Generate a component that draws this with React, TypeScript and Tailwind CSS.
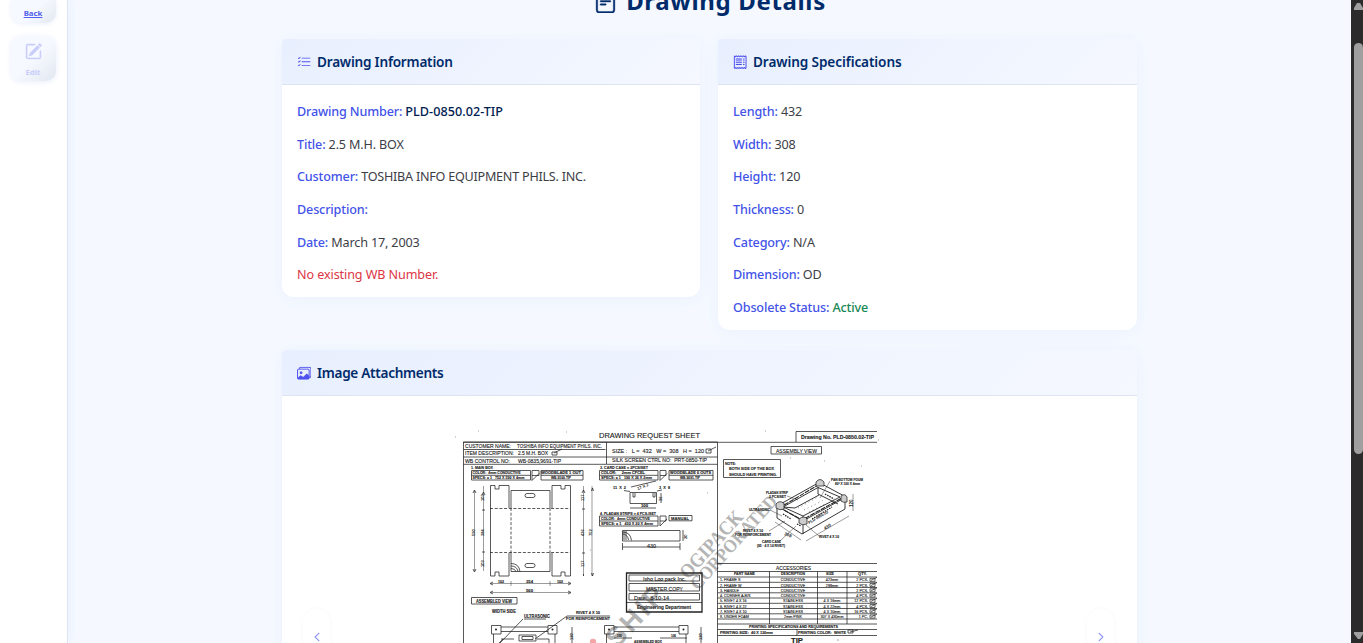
import type { ReactNode } from "react";
import { BsChevronLeft, BsChevronRight, BsFileText, BsImages, BsListCheck, BsPencilSquare, BsReceipt } from "react-icons/bs";

function Card({ icon, title, titleClass, className = "", children }: { icon: ReactNode; title: string; titleClass: string; className?: string; children: ReactNode }) {
  return (
    <section className={`overflow-hidden rounded-t-[4px] rounded-b-xl bg-white shadow-[0_2px_16px_rgba(67,97,238,0.06)] ${className}`}>
      <header className="flex h-[46px] items-center border-b border-[#dbe4f0] bg-linear-135 from-[#e8effe] to-[#f5f8ff] pt-px pl-[15px] text-[#4f52ee]">
        <span className="w-[20px] text-[14.4px]">{icon}</span>
        <h2 className={`pt-px whitespace-nowrap font-semibold text-[#002b6b] ${titleClass}`}>{title}</h2>
      </header>
      {children}
    </section>
  );
}

function Row({ label, value, tone = "text-[#3c4046]", fit = "" }: { label: string; value?: string; tone?: string; fit?: string }) {
  return (
    <p className="h-[32.65px] whitespace-nowrap text-[12.6px] leading-[20.4px] tracking-[-0.15px]">
      <span className="font-medium text-[#4353e8]">{label}</span> <span className={`${tone} ${fit}`}>{value}</span>
    </p>
  );
}

/* x, y, text, width, size, weight */
type Label = [number, number, string, number, number, number];
const labels: Label[] = [
  [599, 437.5, "DRAWING REQUEST SHEET", 101, 7.3, 500],
  [801, 438.5, "Drawing No. PLD-0850.02-TIP", 73, 5.3, 700],
  [465, 447.5, "CUSTOMER NAME:", 46, 5, 500],
  [517, 447.5, "TOSHIBA INFO EQUIPMENT PHILS. INC.", 85, 5, 500],
  [465, 455, "ITEM DESCRIPTION:", 49, 5, 500],
  [518, 455, "2.5 M.H. BOX", 30, 5, 500],
  [465, 462.5, "WB CONTROL NO:", 45, 5, 500],
  [518, 462.5, "WB-0835,9691-TIP", 43, 5, 500],
  [612, 452.5, "SIZE :   L =  432   W =  308   H =  120", 92, 5.4, 500],
  [612, 462, "SILK SCREEN CTRL NO:  PRT-0850-TIP", 95, 5, 500],
  [471, 469, "1. MAIN BOX", 22, 3.8, 600],
  [472.5, 474, "COLOR:  4mm CONDUCTIVE", 48, 3.8, 600],
  [472.5, 479, "SPECS: ± 1   752 X 590 X 4mm", 52, 3.8, 600],
  [541, 474, "WOODBLADE 1 OUT", 40, 3.8, 700],
  [551, 479, "WB-9100-TIP", 20, 3.8, 700],
  [600, 469, "3. CARD CASE = 2PCS/SET", 48, 3.8, 600],
  [601, 474, "COLOR:     2mm CFCEL", 44, 3.8, 600],
  [601, 479, "SPECS: ± 1   190 X 36 X 2mm", 51, 3.8, 600],
  [670, 474, "WOODBLADE 6 OUTS", 41, 3.8, 700],
  [680, 479, "WB-9691-TIP", 20, 3.8, 700],
  [600, 515, "4. PLADAN STRIPS = 4 PCS./SET", 56, 3.8, 600],
  [601, 520, "COLOR:  4mm CONDUCTIVE", 49, 3.8, 600],
  [601, 525, "SPECS: ± 1   430 X 20 X 4mm", 52, 3.8, 600],
  [671, 520, "MANUAL", 18, 4, 700],
  [613, 489, "11  X  2", 13, 4, 600],
  [659, 489, "3  X  8", 11, 4, 600],
  [641, 507, "100", 7, 3.8, 700],
  [647, 548, "430", 9, 5, 500],
  [498, 583, "102", 6, 4, 600],
  [526, 583, "354", 7, 4, 600],
  [557, 583, "102", 6, 4, 600],
  [526, 592, "560", 7, 4, 600],
  [476, 602.5, "ASSEMBLED VIEW", 36, 4.5, 600],
  [492, 612.5, "WIDTH SIDE", 24, 4.5, 600],
  [524, 617.5, "ULTRASONIC", 26, 4.5, 600],
  [576, 614, "RIVET 4 X 10", 24, 4.2, 600],
  [566, 620, "FOR REINFORCEMENT", 44, 4.2, 600],
  [776, 452.5, "ASSEMBLY VIEW", 41, 5.5, 500],
  [725, 464.5, "NOTE:", 11, 4.3, 600],
  [729, 470, "BOTH SIDE OF THE BOX", 45, 4.3, 600],
  [729, 475.5, "SHOULD HAVE PRINTING.", 48, 4.3, 600],
  [831, 481, "PAN BOTTOM FOUM", 32, 3.8, 600],
  [835, 485, "80° X 100 X 4mm", 25, 3.8, 600],
  [766, 494, "PLADAN STRIP", 22, 3.6, 600],
  [769, 498, "2 PCS/SET", 17, 3.6, 600],
  [749, 511, "ULTRASONIC", 21, 3.6, 600],
  [743, 532, "RIVET 4 X 10", 20, 3.6, 600],
  [735, 536, "FOR REINFORCEMENT", 36, 3.6, 600],
  [762, 543, "CARD CASE", 19, 3.6, 600],
  [757, 547, "(95 · 4 X 10 RIVET)", 28, 3.6, 600],
  [819, 538, "RIVET 4 X 10", 20, 3.6, 600],
  [776, 570, "ACCESSORIES", 35, 5, 500],
  [734, 575, "PART NAME", 21, 3.8, 700],
  [781, 575, "DESCRIPTION", 24, 3.8, 700],
  [826, 575, "SIZE", 8, 3.8, 700],
  [858, 575, "QTY.", 9, 3.8, 700],
  [749, 628, "PRINTING SPECIFICATIONS AND REQUIREMENTS", 89, 3.8, 700],
  [720, 633.5, "PRINTING SIZE:  40 X 130mm", 53, 3.8, 700],
  [798, 633.5, "PRINTING COLOR:  WHITE", 48, 3.8, 700],
  [791, 643, "TIP", 12, 6.5, 700],
  [643, 580.5, "Isho Loo pack Inc.", 43, 5, 500],
  [646, 590.5, "MASTER COPY", 37, 5, 500],
  [634, 600, "Date:  8-10-14", 35, 5, 500],
  [637, 608.5, "Engineering Department", 54, 5, 700],
  [617, 637, "106", 5, 3.6, 600],
  [671, 637, "106", 5, 3.6, 600],
  [634, 642.5, "ASSEMBLED BOX", 28, 3.8, 700],
];

const verticalDimensions: [number, number, string][] = [
  [475, 536, "590"], [484, 536, "384"], [484, 501, "103"], [484, 567, "103"],
  [584, 501, "117"], [584, 536, "436"], [592, 536, "752"], [584, 567, "117"],
  [662, 501, "36"], [687, 539, "20"], [573, 640, "120"], [702, 640, "120"],
];

const parts: [string, string, string, string][] = [
  ["1. FRAME S", "CONDUCTIVE", "423mm", "2 PCS."],
  ["2. FRAME W", "CONDUCTIVE", "299mm", "2 PCS."],
  ["3. HANDLE", "CONDUCTIVE", "", "2 PCS."],
  ["4. CORNER A-B/S", "CONDUCTIVE", "", "4 PCS."],
  ["5. RIVET 4 X 16", "STAINLESS", "4 X 16mm", "12 PCS."],
  ["6. RIVET 4 X 22", "STAINLESS", "4 X 22mm", "4 PCS."],
  ["7. RIVET 4 X 10", "STAINLESS", "4 X 10mm", "16 PCS."],
  ["8. UNDER FOAM", "2mm PINK", "307 X 430mm", "1 PC."],
];

function TechnicalDrawing() {
  return (
    <svg viewBox="455 425 430 218" width="430" height="218" className="block shrink-0 font-['Liberation_Sans',sans-serif]" fill="none" stroke="#222" strokeWidth=".75">
      <g fill="#b4b4b4" stroke="none" className="font-['Liberation_Serif',serif]" fontWeight="700">
        <text transform="translate(617 649) rotate(-47)" fontSize="27" textLength="72" className="font-['Liberation_Sans',sans-serif]">SHIP</text>
        <text transform="translate(688 580) rotate(-48)" fontSize="20" textLength="84" lengthAdjust="spacingAndGlyphs">OGIPACK</text>
        <text transform="translate(698 591) rotate(-48)" fontSize="18.5" textLength="120" lengthAdjust="spacingAndGlyphs">CORPORATED</text>
        <circle cx="593" cy="642" r="3.2" fill="#f4a5a5" />
      </g>

      <path d="M463.5 643V442H717.5M463 442.3H877M463.5 449.5H605.5M463.5 457H717.5M463.5 464.3H717.5M606.5 442V464M717.5 442V643" />
      <path d="M877 431.5H796V442M771 446.5H821.5V454H771ZM723.5 459.5H780.5V477.5H723.5Z" />
      <path d="M552 452h5v3h-5zm2 1 8-4M706 449h5v4h-5zm2 2 8-4" />

      <path d="M471.5 470.5H530.5V480H471.5ZM471.5 475.3H530.5M541 470.5H583V480H541ZM541 475.3H583M532 470.5h7v5h-7zm0 5v5l7-7M599.5 470.5H658V480H599.5ZM599.5 475.3H658M669 470.5H713V480H669ZM669 475.3H713M660 470.5h6v5h-6zm0 5v5l7-7" />
      <path d="M599.5 516H658V526H599.5ZM599.5 521H658M660 516h6v5h-6zm0 5v5l7-7M669 515.5H692V520.8H669Z" />

      <path d="M490.5 485.5H495V489H499V485.5H509V508M511 508V490.5H550V508M552 508V485.5H561V489H565V485.5H570.5V576H565V572H561V576H552V553M550 553V571.5H511V553M509 553V576H499V572H495V576H490.5V485.5" />
      <path d="M490 508.5H570M490 552.5H570M511 508V553M550 508V553" strokeDasharray="3 1.7" />
      <rect x="525" y="493.5" width="10" height="4" rx="2" /><rect x="525" y="563.5" width="10" height="4" rx="2" />
      <path d="M511 563.5q8 0 9 8M511 566q6 0 7 5.5M511 568.5q4 0 5 3" />
      <path d="M474.5 491V571M483.5 486V571M583.5 486V576M592 486V576M491 583.5H570M491 592.5H570M511 581V586M550 581V586" strokeWidth=".45" />
      <path d="m473 493 1.5-3 1.5 3M473 569l1.5 3 1.5-3m6-74 1.5-3 1.5 3m-3 15h3m-3 42h3m97-59 1.5-3 1.5 3m-3 16h3m-3 44h3m-1.5 21v2m8-85 1-3 1 3m-2 82 1 3 1-3M493 582l-3 1.5 3 1.5m75-3 3 1.5-3 1.5M493 591l-3 1.5 3 1.5m75-3 3 1.5-3 1.5" />
      <path d="M471.5 597.5H517V604H471.5Z" />

      <path d="M630 503.5V492.5H656.5V503.5ZM633 493V497H635V493M653 493V497H655V493M631 487 656 481M630 491.5l-6-1M657 491l5-1M661 493V503M630 508H656" />
      <path d="M622.5 530.5H680V541H622.5ZM622.5 532q8 0 9 8.5M622.5 534q5 0 6 6M626 531v9M624 531v9M683 530V541M622.5 543V550M680 543V550M623 547H680" />
      <path d="M626.5 573H702V612H626.5Z" strokeWidth="1.3" />
      <path d="M629 575H699.5V581H629ZM629 583.5H699.5V591H629ZM629 593.5H699.5V600H629ZM627 602.5H702" />

      <path d="M491.5 625.5H501V634H491.5ZM548 625.5H557V634H548ZM501 627H548M501 631.5H548M493.5 634V643M555 634V643M519 635h17v6h-17zm3 1.5h11v3h-11zM501 639h13m-11 0-4 4M537 639h12v4M524 619H541L546 619M523 619l-23 24M610 616h-43l-32 23M572 627V643" />
      <path d="M604.5 625.5H614V634H604.5ZM679 625.5H688V634H679ZM614 627H679M614 631.5H679M606.5 634V643M686 634V643M614 638H632M660 638H687M701 627V643" />
      <g fill="#222" stroke="none"><circle cx="496" cy="629.5" r="1" /><circle cx="552.5" cy="629.5" r="1" /><circle cx="609" cy="629.5" r="1" /><circle cx="683.5" cy="629.5" r="1" /></g>

      <path d="M777 506 819 482.5 846 497 803 521ZM783 507 818 487.5 840 497 803 516ZM777 506V518L802 534 845 509V497M803 521V534M818 487V494L838 504M783 507l12 1 24-13M803 516V520" strokeWidth=".9" />
      <path d="M779 508 820 484M784 510 802 520 842 498" strokeWidth="1.1" strokeDasharray="5 1" />
      <path d="M776 504q3-4 8-1v6q-4 2-8-1zM816 482q4-5 8 0v4h-8zM799 519q5-4 8 0v5q-5 2-8-1zM841 496q4-3 6 1v5q-4 1-6-1z" fill="#ccc" />
      <path d="M783 514l8 5M797 524l4 2M812 519l20-12M825 494l9 5" strokeWidth="1.3" strokeDasharray="1.5 1" />
      <path d="M798 508l20-11M804 510l20-10M809 512l18-9" strokeDasharray="1 3" strokeWidth=".5" />
      <path d="M830 481 820 498M787 496l11 4M770 510l12 6M769 531l16-10M780 541l16-15M819 536l-13-11M853 494V511M806 541l43-25M775 522l26 18" strokeWidth=".45" />
      <g fill="#222" stroke="none" fontSize="4.5" fontWeight="700">
        <text x="784" y="535" transform="rotate(20 784 535)">308</text>
        <text x="825" y="530" transform="rotate(-32 825 530)">430</text>
        <text x="853" y="507" transform="rotate(-90 853 507)">120</text>
        <text x="809" y="524" transform="rotate(-30 809 524)" fontSize="3.8">PLD-0850.02</text>
      </g>

      <path d="M717.5 563.5H877M717.5 571.5H877M717.5 577H877M717.5 582.3H877M717.5 587.5H877M717.5 592.8H877M717.5 598H877M717.5 603.3H877M717.5 608.5H877M717.5 613.8H877M717.5 619H877M717.5 624H877M717.5 629.5H877M717.5 635.5H877M769.5 571.5V624M817.5 571.5V624M847 571.5V624M797 629.5V635.5" />
      <g fill="#222" stroke="#222" strokeWidth=".12" fontSize="3.7" fontWeight="500">
        {parts.map(([name, description, size, quantity], i) => (
          <g key={name} transform={`translate(0 ${581.3 + i * 5.25})`}>
            <text x="720">{name}</text>
            <text x="793" textAnchor="middle">{description}</text>
            <text x="832" textAnchor="middle">{size}</text>
            <text x="868" textAnchor="end">{quantity}</text>
            <path d="M870-3h5v3h-5zm1 2 6-3" fill="none" strokeWidth=".7" />
          </g>
        ))}
        {labels.map(([x, y, text, width, size, weight]) => (
          <text key={`${x}-${y}`} x={x} y={y} fontSize={size} fontWeight={weight} textLength={width} lengthAdjust="spacingAndGlyphs" className="whitespace-pre">{text}</text>
        ))}
        {verticalDimensions.map(([x, y, text]) => (
          <text key={`${x}-${y}`} transform={`translate(${x} ${y}) rotate(-90)`} fontSize="4">{text}</text>
        ))}
        <text x="638" y="490" transform="rotate(-22 638 490)" fontSize="4">17 X 2</text>
      </g>
      <path d="M848 630h5v3h-5zm2 2 8-2" />
      <path d="M478 431h1M566 432h1M455 437h1M765 431h1M878 440h1M790 458h1M824 461h1M861 466h1M590 550h1M707 493h1M838 639v2" stroke="#888" />
    </svg>
  );
}

function SliderButton({ children }: { children: ReactNode }) {
  return <button className="flex h-[56px] w-[27px] items-center justify-center rounded-full bg-white/90 text-[10px] text-[#7b86f5] shadow-[0_0_4px_rgba(0,0,0,0.04)] [&_svg]:stroke-[0.7]">{children}</button>;
}

export default function App() {
  return (
    <div className="flex h-[643px] w-full overflow-hidden bg-[#f5f9ff] font-['Noto_Sans',sans-serif]">
      <aside className="flex w-[68px] shrink-0 flex-col items-center border-r border-[#dfe4f2] bg-white shadow-[2px_0_10px_rgba(67,97,238,0.05)]">
        <a className="mr-px flex h-[23px] w-[45px] items-center justify-center rounded-b-[10px] bg-linear-135 from-[#f6f9ff] from-50% to-[#e2e8f0] pt-[4px] text-[7.8px] font-bold text-[#5361e8] underline underline-offset-1 shadow-[0_1px_4px_rgba(67,97,238,0.1)]">Back</a>
        <button disabled className="mt-[13px] mr-px flex h-[45px] w-[45px] flex-col items-center rounded-[10px] bg-linear-135 from-[#f6f9ff] from-50% to-[#e2e8f0] pt-[7px] text-[#c9cdfb] shadow-[0_1px_5px_rgba(67,97,238,0.12)] [&_svg]:stroke-[0.4]">
          <BsPencilSquare size={17} />
          <span className="mt-[6px] text-[7.8px] leading-[12px] font-bold">Edit</span>
        </button>
      </aside>

      <main className="flex min-w-0 flex-1 flex-col items-center">
        <h1 className="flex h-[39px] w-full shrink-0 items-start justify-center text-[#002b6b]">
          <BsFileText size={25} className="-mt-[12px] mr-[8px] stroke-[0.25]" />
          <span className="-mt-[17px] text-[24px] leading-[36px] font-bold tracking-[0.65px]">Drawing Details</span>
        </h1>
        <div className="flex w-[855px] shrink-0 items-start gap-[18px]">
          <Card className="h-[258px] w-[418px]" icon={<BsListCheck />} title="Drawing Information" titleClass="text-[13.6px] tracking-[-0.22px]">
            <div className="px-[15px] pt-[17px]">
              <Row label="Drawing Number:" value="PLD-0850.02-TIP" tone="font-medium text-[#002050]" fit="tracking-[0.05px]" />
              <Row label="Title:" value="2.5 M.H. BOX" />
              <Row label="Customer:" value="TOSHIBA INFO EQUIPMENT PHILS. INC." fit="tracking-[-0.24px]" />
              <Row label="Description:" />
              <Row label="Date:" value="March 17, 2003" />
              <p className="h-[32.65px] text-[12.6px] leading-[20.4px] tracking-[-0.1px] text-[#dc3545]">No existing WB Number.</p>
            </div>
          </Card>
          <Card className="h-[291px] w-[419px]" icon={<BsReceipt className="stroke-[0.1]" />} title="Drawing Specifications" titleClass="text-[13.6px] tracking-[-0.1px]">
            <div className="px-[15px] pt-[17px]">
              <Row label="Length:" value="432" />
              <Row label="Width:" value="308" />
              <Row label="Height:" value="120" />
              <Row label="Thickness:" value="0" />
              <Row label="Category:" value="N/A" />
              <Row label="Dimension:" value="OD" />
              <Row label="Obsolete Status:" value="Active" tone="font-medium text-[#198754]" />
            </div>
          </Card>
        </div>
        <Card className="mt-[20px] h-[330px] w-[855px] shrink-0" icon={<BsImages className="stroke-[0.15]" />} title="Image Attachments" titleClass="pt-[2px] text-[13.6px] tracking-[-0.3px]">
          <div className="flex items-start justify-between pt-[28px] pr-[23px] pl-[21px]">
            <div className="pt-[185px]"><SliderButton><BsChevronLeft /></SliderButton></div>
            <div className="w-[734px] pt-px pl-[113px]"><TechnicalDrawing /></div>
            <div className="pt-[185px]"><SliderButton><BsChevronRight /></SliderButton></div>
          </div>
        </Card>
      </main>

      <div className="flex w-[12px] shrink-0 flex-col items-end bg-[#2b2b2b]">
        <svg width="9" height="43" viewBox="0 0 9 43"><path d="M0 10V8L3 3H6L9 8V10Z" fill="#9f9f9f" /></svg>
        <div className="h-[411px] w-[9px] rounded-full bg-[#9f9f9f]" />
        <svg width="9" height="189" viewBox="0 0 9 189"><path d="M0 178H9V180L6 185H4L0 180Z" fill="#9f9f9f" /></svg>
      </div>
    </div>
  );
}
